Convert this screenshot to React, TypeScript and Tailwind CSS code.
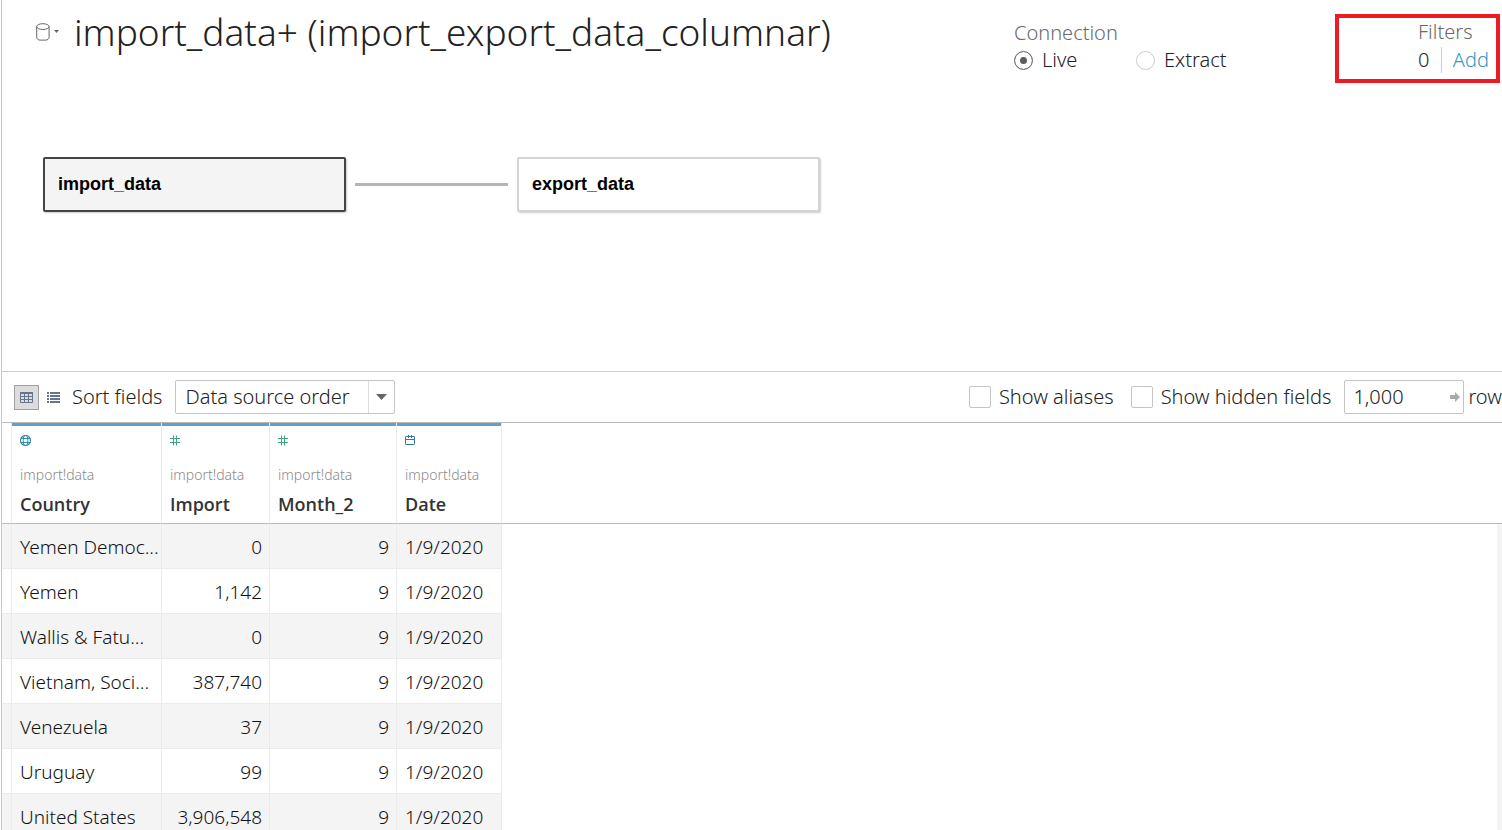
import { useState } from "react";

type FieldKind = "geo" | "number" | "date";

const fields: { name: string; table: string; kind: FieldKind }[] = [
  { name: "Country", table: "import!data", kind: "geo" },
  { name: "Import", table: "import!data", kind: "number" },
  { name: "Month_2", table: "import!data", kind: "number" },
  { name: "Date", table: "import!data", kind: "date" },
];

const rows = [
  ["Yemen Democ...", "0", "9", "1/9/2020"],
  ["Yemen", "1,142", "9", "1/9/2020"],
  ["Wallis & Fatu...", "0", "9", "1/9/2020"],
  ["Vietnam, Soci...", "387,740", "9", "1/9/2020"],
  ["Venezuela", "37", "9", "1/9/2020"],
  ["Uruguay", "99", "9", "1/9/2020"],
  ["United States", "3,906,548", "9", "1/9/2020"],
];

function DatabaseIcon() {
  return (
    <svg width="14" height="18" viewBox="0 0 14 18" fill="none" stroke="#666" strokeWidth="1">
      <ellipse cx="6.9" cy="3.6" rx="6.2" ry="2.9" />
      <path d="M.7 3.6v10.6c0 1.6 1.6 2.9 3.4 2.9h5.600c1.900 0 3.400-1.300 3.400-2.900V3.600" />
    </svg>
  );
}

function FieldIcon({ kind }: { kind: FieldKind }) {
  if (kind === "geo") {
    return (
      <svg width="12" height="12" viewBox="0 0 12 12" fill="none" stroke="#3b87a8" strokeWidth="1">
        <circle cx="5.500" cy="5.500" r="5" strokeWidth="1.200" />
        <ellipse cx="5.500" cy="5.500" rx="2.300" ry="5" />
        <path d="M1 3.500h9M.5 7.500h10" />
      </svg>
    );
  }
  if (kind === "number") {
    return (
      <svg width="12" height="12" viewBox="0 0 12 12" fill="none" stroke="#3fa580" strokeWidth="1">
        <path d="M3.500 .5v10M6.500 .5v10M0 3.500h10M0 7.500h10" />
      </svg>
    );
  }
  return (
    <svg width="12" height="12" viewBox="0 0 12 12" fill="none" stroke="#2f7a99" strokeWidth="1">
      <rect x=".5" y="1.500" width="9" height="8" rx=".6" />
      <path d="M0 4.500h10M3.500 0v3M6.500 0v3" />
    </svg>
  );
}

function GridIcon() {
  return (
    <svg width="13" height="11" viewBox="0 0 13 11" fill="none" stroke="#67758c">
      <path d="M0 1h13" strokeWidth="2" />
      <path d="M.5 1v9.500h12V1M4.500 1v9.500M8.500 1v9.500M0 4.500h13M0 7.500h13" />
    </svg>
  );
}

function ListIcon() {
  return (
    <svg width="13" height="11" viewBox="0 0 13 11" fill="#67758c">
      {[0, 3, 6, 9].map((y) => (
        <g key={y}>
          <rect x="0" y={y} width="2" height="2" />
          <rect x="3" y={y} width="10" height="2" />
        </g>
      ))}
    </svg>
  );
}

function Checkbox({ label }: { label: string }) {
  return (
    <label className="flex items-center gap-2 whitespace-nowrap">
      <input
        type="checkbox"
        className="size-[22px] shrink-0 appearance-none rounded-[2px] border border-[#c4c4c4] bg-white checked:bg-[#67758c]"
      />
      {label}
    </label>
  );
}

export default function App() {
  const [connection, setConnection] = useState("Live");
  const [limit, setLimit] = useState("1,000");

  return (
    <div className="h-screen overflow-hidden bg-white pl-px font-['Noto_Sans','Open_Sans',sans-serif] text-xl font-light text-[#222]">
      <main className="flex h-full flex-col border-l border-[#c8c8c8]">
        <section className="h-[372px] shrink-0 border-b border-[#cfcfcf]">
          <header className="flex items-start pr-0.5">
            <button type="button" aria-label="Data source menu" className="mt-[23px] ml-[34px] flex items-center gap-1">
              <DatabaseIcon />
              <svg width="6" height="4" viewBox="0 0 6 4" fill="#666">
                <path d="M0 0h5L2.500 3z" />
              </svg>
            </button>
            <h1 className="ml-3.5 pt-2 text-[37px] leading-[48px] whitespace-nowrap">
              import_data+ (import_export_data_columnar)
            </h1>
            <fieldset className="mt-5 ml-auto w-[216px]">
              <legend className="leading-[26px] text-[#6a6a6a]">Connection</legend>
              <div className="grid grid-cols-[122px_auto] leading-[28px]">
                {["Live", "Extract"].map((name) => (
                  <label key={name} className="flex items-center gap-[9px]">
                    <input
                      type="radio"
                      name="connection"
                      checked={connection === name}
                      onChange={() => setConnection(name)}
                      className="size-[19px] appearance-none rounded-full border border-[#ccc] bg-white checked:border-[#777] checked:bg-[#5c5c5c] checked:shadow-[inset_0_0_0_5px_white]"
                    />
                    {name}
                  </label>
                ))}
              </div>
            </fieldset>
            <div className="mt-3.5 ml-[105px] flex h-[69px] w-[165px] flex-col items-end border-4 border-[#ed1c24] pr-[7px]">
              <div className="w-[71px] leading-[28px] text-[#6a6a6a]">Filters</div>
              <div className="flex w-[71px] items-center justify-between leading-[28px]">
                <span>0</span>
                <span className="h-[26px] w-px bg-[#ccc]" />
                <a href="#filters" className="text-[#3a95bd]">Add</a>
              </div>
            </div>
          </header>
          <div className="mt-[74px] ml-[41px] flex items-center gap-[9px] font-['Liberation_Sans',Arial,sans-serif] text-lg leading-6 font-bold text-black">
            <button
              type="button"
              className="h-[55px] w-[303px] rounded-[2px] border-2 border-[#444] bg-[#f4f4f4] px-[13px] pb-0.5 text-left shadow-[1px_1px_2px_rgba(0,0,0,0.2)]"
            >
              import_data
            </button>
            <span className="h-[3px] w-[153px] bg-[#b5b5b5]" />
            <button
              type="button"
              className="h-[55px] w-[303px] rounded-[2px] border-2 border-[#d4d4d4] bg-white px-[13px] pb-0.5 text-left shadow-[1px_1px_2px_rgba(0,0,0,0.2)]"
            >
              export_data
            </button>
          </div>
        </section>

        <div className="flex h-[51px] shrink-0 items-center border-b border-[#bbb] pl-3">
          <button
            type="button"
            aria-label="Grid view"
            className="flex size-[25px] items-center justify-center border border-[#a0a0a0] bg-[#dcdcdc]"
          >
            <GridIcon />
          </button>
          <button type="button" aria-label="List view" className="mr-3 ml-2">
            <ListIcon />
          </button>
          <label htmlFor="sort">Sort fields</label>
          <div className="relative ml-3">
            <select id="sort" className="h-[34px] w-[220px] appearance-none rounded-[2px] border border-[#c4c4c4] bg-white pl-2.5">
              <option>Data source order</option>
            </select>
            <span className="pointer-events-none absolute inset-y-px right-px flex w-[26px] items-center justify-center border-l border-[#ddd]">
              <svg width="11" height="6" viewBox="0 0 11 6" fill="#666">
                <path d="M0 0h11L5.500 6z" />
              </svg>
            </span>
          </div>
          <div className="ml-auto flex items-center">
            <Checkbox label="Show aliases" />
            <div className="ml-[17px]">
              <Checkbox label="Show hidden fields" />
            </div>
            <div className="relative ml-[13px]">
              <input
                id="limit"
                type="text"
                value={limit}
                onChange={(e) => setLimit(e.target.value)}
                className="h-[34px] w-[120px] rounded-[2px] border border-[#c4c4c4] bg-white pb-0.5 pl-2"
              />
              <svg className="pointer-events-none absolute top-3 right-1" width="10" height="10" viewBox="0 0 10 10" fill="#aaa">
                <path d="M0 3h5V0l5 5-5 5V7H0z" />
              </svg>
            </div>
            <label htmlFor="limit" className="ml-1">row</label>
          </div>
        </div>

        <div className="relative min-h-0 grow overflow-hidden">
          <div className="flex">
            <table className="w-[500px] shrink-0 table-fixed border-separate border-spacing-0 text-[19px]">
              <colgroup>
                <col className="w-[10px]" />
                <col className="w-[150px]" />
                <col className="w-[108px]" />
                <col className="w-[127px]" />
                <col className="w-[105px]" />
              </colgroup>
              <thead>
                <tr>
                  <td className="border-r border-b border-r-[#ebebeb] border-b-[#bbb]" />
                  {fields.map((field) => (
                    <th
                      key={field.name}
                      scope="col"
                      className="h-[101px] border-r border-b border-r-[#ebebeb] border-b-[#bbb] p-0 text-left align-top"
                    >
                      <div className="h-[3px] bg-[#5fa2c4]" />
                      <div className="px-2 pt-[9px]">
                        <FieldIcon kind={field.kind} />
                        <div className="mt-[18px] text-sm leading-5 font-light text-[#8a8a8a]">{field.table}</div>
                        <div className="mt-[7px] font-['Open_Sans','Noto_Sans',sans-serif] text-lg leading-6 font-semibold text-[#333]">
                          {field.name}
                        </div>
                      </div>
                    </th>
                  ))}
                </tr>
              </thead>
              <tbody className="text-[#111]">
                {rows.map((row) => (
                  <tr key={row[0]} className="odd:bg-[#f4f4f4]">
                    <td className="border-r border-b border-[#ebebeb]" />
                    {row.map((value, i) => (
                      <td
                        key={fields[i].name}
                        className={`h-[45px] border-r border-b border-[#ebebeb] pt-0.5 pb-0 pl-2 whitespace-nowrap ${
                          fields[i].kind === "number" ? "pr-[7px] text-right" : "pr-0 text-left"
                        }`}
                      >
                        {value}
                      </td>
                    ))}
                  </tr>
                ))}
              </tbody>
            </table>
            <div className="h-[101px] grow border-b border-[#bbb]" />
          </div>
          <div className="absolute top-[101px] right-0 bottom-0 w-[5px] bg-[#f4f4f4]" />
        </div>
      </main>
    </div>
  );
}
